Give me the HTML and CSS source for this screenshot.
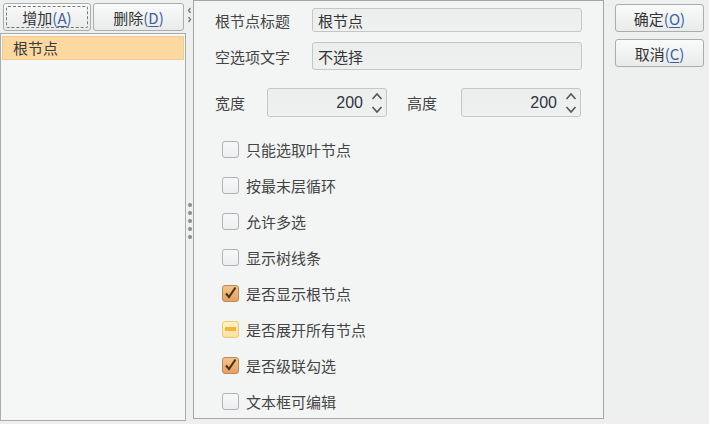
FILE: index.html
```html
<!DOCTYPE html>
<html lang="zh-CN">
<head>
  <meta charset="UTF-8">
  <title>树节点设置</title>
  <link rel="stylesheet" href="styles.css">
</head>
<body>
  <div class="window">
    <!-- Node list -->
    <div class="left">
      <div class="toolbar">
        <button class="btn btn-add"><span class="focus">增加<span class="key">(<u>A</u>)</span></span></button>
        <button class="btn btn-del">删除<span class="key">(<u>D</u>)</span></button>
      </div>
      <div class="list">
        <div class="item selected">根节点</div>
      </div>
    </div>

    <!-- Splitter -->
    <div class="splitter">
      <div class="arrows">
        <svg width="5" height="16" viewBox="0 0 5 16"><path d="M3.5 1 L1.5 3.5 L3.5 6" fill="none" stroke="#777" stroke-width="1.3"/><path d="M1.5 10 L3.5 12.5 L1.5 15" fill="none" stroke="#777" stroke-width="1.3"/></svg>
      </div>
      <div class="grip">
        <span class="dot"></span><span class="dot"></span><span class="dot"></span><span class="dot"></span><span class="dot"></span>
      </div>
    </div>

    <!-- Properties -->
    <div class="main">
      <div class="field">
        <label>根节点标题</label>
        <div class="input">根节点</div>
      </div>
      <div class="field tall">
        <label>空选项文字</label>
        <div class="input">不选择</div>
      </div>
      <div class="size-row">
        <label class="size-label">宽度</label>
        <div class="spin">
          <span class="value">200</span>
          <svg class="spin-arrows" width="12" height="26" viewBox="0 0 12 26"><path d="M1.5 9 L6 4 L10.5 9" fill="none" stroke="#555" stroke-width="1.6"/><path d="M1.5 17 L6 22 L10.5 17" fill="none" stroke="#555" stroke-width="1.6"/></svg>
        </div>
        <label class="size-label second">高度</label>
        <div class="spin">
          <span class="value">200</span>
          <svg class="spin-arrows" width="12" height="26" viewBox="0 0 12 26"><path d="M1.5 9 L6 4 L10.5 9" fill="none" stroke="#555" stroke-width="1.6"/><path d="M1.5 17 L6 22 L10.5 17" fill="none" stroke="#555" stroke-width="1.6"/></svg>
        </div>
      </div>

      <div class="checks">
        <div class="check"><span class="box"></span>只能选取叶节点</div>
        <div class="check"><span class="box"></span>按最末层循环</div>
        <div class="check"><span class="box"></span>允许多选</div>
        <div class="check"><span class="box"></span>显示树线条</div>
        <div class="check"><span class="box checked"><svg width="15" height="15" viewBox="0 0 15 15"><path d="M3 7.5 L6 11 L12.5 1.5" fill="none" stroke="#4a3320" stroke-width="2.2"/></svg></span>是否显示根节点</div>
        <div class="check"><span class="box mixed"><span class="bar"></span></span>是否展开所有节点</div>
        <div class="check"><span class="box checked"><svg width="15" height="15" viewBox="0 0 15 15"><path d="M3 7.5 L6 11 L12.5 1.5" fill="none" stroke="#4a3320" stroke-width="2.2"/></svg></span>是否级联勾选</div>
        <div class="check"><span class="box"></span>文本框可编辑</div>
      </div>
    </div>

    <!-- Dialog buttons -->
    <div class="actions">
      <button class="btn">确定<span class="key">(<u>O</u>)</span></button>
      <button class="btn">取消<span class="key">(<u>C</u>)</span></button>
    </div>
  </div>
</body>
</html>
```

FILE: styles.css
```css
body {
  margin: 0;
  background-color: #eef0f0;
  font-family: "Noto Sans CJK SC", "Noto Sans", sans-serif;
  font-size: 15px;
  color: #3a3a3a;
}
.window {
  display: flex;
  height: 424px;
  overflow: hidden;
}
.btn {
  font-family: inherit;
  font-size: 15px;
  color: #333;
  height: 28px;
  padding: 0;
  border: 1px solid #a9adad;
  border-radius: 3px;
  background: linear-gradient(#f9fafa, #e9ebeb);
  display: flex;
  align-items: center;
  justify-content: center;
  line-height: 1;
}
.key {
  color: #3d5f9e;
}
.key u {
  text-decoration-thickness: 1px;
  text-underline-offset: 2px;
}

/* left side */
.left {
  width: 186px;
  display: flex;
  flex-direction: column;
}
.toolbar {
  display: flex;
  gap: 2px;
  padding: 3px 0 2px 3px;
}
.btn-add {
  width: 88px;
  padding: 2px;
}
.btn-add .focus {
  flex: 1;
  align-self: stretch;
  display: flex;
  align-items: center;
  justify-content: center;
  border: 1px dashed #777;
  border-radius: 2px;
}
.btn-del {
  width: 91px;
}
.list {
  flex: 1;
  margin-bottom: 3px;
  border: 1px solid #a8acac;
  background-color: #f5f6f6;
  padding: 2px 1px;
}
.item {
  height: 22px;
  line-height: 22px;
  padding-left: 10px;
  border: 1px solid transparent;
}
.item.selected {
  background-color: #fdd9a2;
  border-color: #f7c98c;
}

/* splitter */
.splitter {
  width: 7px;
  display: flex;
  flex-direction: column;
  align-items: center;
}
.arrows {
  padding-top: 6px;
  height: 20px;
}
.grip {
  flex: 1;
  display: flex;
  flex-direction: column;
  justify-content: center;
  gap: 4px;
  padding-bottom: 8px;
}
.dot {
  width: 4px;
  height: 4px;
  border-radius: 50%;
  background-color: #8a8c8c;
}

/* properties */
.main {
  width: 409px;
  height: 419px;
  border: 1px solid #a3a7a7;
  background-color: #f3f4f4;
  padding: 7px 21px 0 21px;
  box-sizing: border-box;
  width: 411px;
}
.field {
  display: flex;
  align-items: center;
  height: 24px;
  margin-bottom: 10px;
}
.field.tall {
  height: 28px;
  margin-bottom: 18px;
}
.field label {
  width: 97px;
  color: #444;
}
.input {
  flex: 1;
  align-self: stretch;
  display: flex;
  align-items: center;
  padding-left: 5px;
  border: 1px solid #c3c7c7;
  border-radius: 3px;
  background: linear-gradient(#eceeee, #eff1f1);
  color: #333;
}
.size-row {
  display: flex;
  align-items: center;
  height: 29px;
}
.size-label {
  width: 52px;
  color: #444;
}
.size-label.second {
  width: 54px;
  margin-left: 20px;
}
.spin {
  width: 120px;
  align-self: stretch;
  display: flex;
  align-items: center;
  justify-content: flex-end;
  border: 1px solid #c3c7c7;
  border-radius: 3px;
  background: linear-gradient(#eceeee, #eff1f1);
  box-sizing: border-box;
  padding-right: 3px;
  color: #2f3540;
  font-family: "Liberation Sans", Arial, sans-serif;
  font-size: 16px;
}
.spin .value {
  margin-right: 8px;
}
.checks {
  margin-top: 14px;
  padding-left: 7px;
}
.check {
  height: 36px;
  display: flex;
  align-items: center;
  color: #444;
}
.box {
  width: 17px;
  height: 17px;
  box-sizing: border-box;
  border: 1px solid #adb2b6;
  border-radius: 3px;
  background: linear-gradient(#f7f8f9, #eceef0);
  margin-right: 7px;
  display: flex;
  align-items: center;
  justify-content: center;
}
.box.checked {
  border-color: #b98a5a;
  background: linear-gradient(#f6c48a, #e6a060);
}
.box.mixed {
  border-color: #f0c870;
  background: linear-gradient(#fff1c4, #fde2a0);
}
.box .bar {
  width: 11px;
  height: 4px;
  background-color: #f5b43a;
}

/* dialog buttons */
.actions {
  display: flex;
  flex-direction: column;
  gap: 7px;
  padding: 4px 0 0 11px;
}
.actions .btn {
  width: 89px;
}
```
